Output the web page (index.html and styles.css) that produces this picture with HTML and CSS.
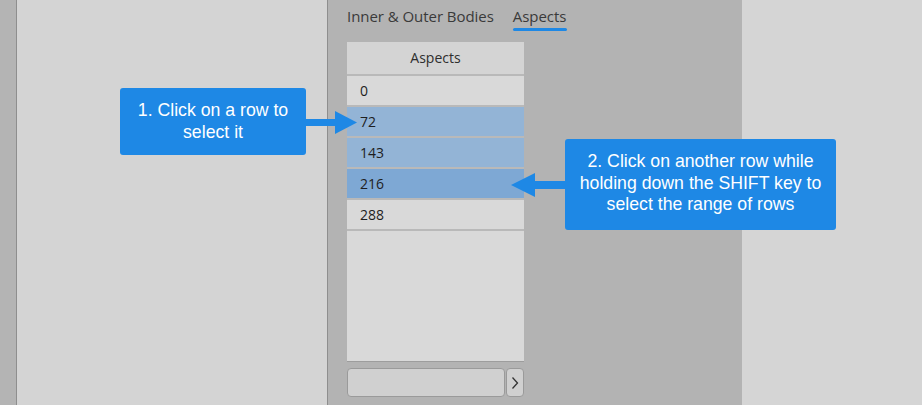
FILE: index.html
```html
<!DOCTYPE html>
<html>
<head>
<meta charset="utf-8">
<link rel="stylesheet" href="styles.css">
</head>
<body>
<div class="app">
  <div class="strip"></div>
  <div class="side"></div>
  <div class="panel">
    <div class="tabs">
      <div class="tab">Inner &amp; Outer Bodies</div>
      <div class="tab active">Aspects</div>
    </div>
    <div class="table">
      <div class="head">Aspects</div>
      <div class="row">0</div>
      <div class="row sel">72</div>
      <div class="row sel">143</div>
      <div class="row sel2">216</div>
      <div class="row">288</div>
      <div class="fill"></div>
    </div>
    <div class="controls">
      <div class="input"></div>
      <div class="btn">
        <svg width="10" height="14" viewBox="0 0 10 14"><path d="M2.5 1.5 L7.5 7 L2.5 12.5" fill="none" stroke="#333" stroke-width="1.3"/></svg>
      </div>
    </div>
  </div>
  <div class="rightside"></div>

  <div class="callout c1">1. Click on a row to<br>select it</div>
  <svg class="arrow a1" width="52" height="24" viewBox="0 0 52 24">
    <rect x="0" y="8" width="30" height="7" fill="#1e88e5"/>
    <polygon points="29,0 51,11.5 29,23" fill="#1e88e5"/>
  </svg>
  <div class="callout c2">2. Click on another row while<br>holding down the SHIFT key to<br>select the range of rows</div>
  <svg class="arrow a2" width="55" height="25" viewBox="0 0 55 25">
    <rect x="23" y="8" width="32" height="8" fill="#1e88e5"/>
    <polygon points="24,0 0,12 24,24" fill="#1e88e5"/>
  </svg>
</div>
</body>
</html>
```

FILE: styles.css
```css
html, body {
  margin: 0;
  padding: 0;
}
body {
  font-family: "Open Sans", "Liberation Sans", sans-serif;
}
.app {
  position: relative;
  display: flex;
  width: 922px;
  height: 405px;
  overflow: hidden;
  background: #d4d4d4;
}
.strip {
  width: 16px;
  background: #b4b4b4;
  border-right: 1px solid #8e8e8e;
}
.side {
  width: 310px;
  background: #d4d4d4;
  border-right: 1px solid #8e8e8e;
}
.panel {
  width: 376px;
  padding: 0 19px;
  background: #b3b3b3;
  display: flex;
  flex-direction: column;
}
.rightside {
  flex: 1;
  background: #d5d5d5;
}
.tabs {
  display: flex;
  gap: 19px;
  padding-top: 6px;
  height: 36px;
}
.tab {
  font-size: 15px;
  line-height: 20px;
  color: #3a3a3a;
  height: 25px;
  letter-spacing: -0.05px;
}
.tab.active {
  position: relative;
}
.tab.active::after {
  content: "";
  position: absolute;
  left: 0;
  right: -1px;
  top: 22px;
  height: 3px;
  border-radius: 2px;
  background: #1e88e5;
}
.table {
  width: 177px;
  height: 319px;
  display: flex;
  flex-direction: column;
  gap: 2px;
  background: #b9b9b9;
  border-bottom: 1px solid #9d9d9d;
}
.head {
  height: 32px;
  line-height: 32px;
  text-align: center;
  font-size: 14px;
  color: #2e2e2e;
  background: #d4d4d4;
}
.row {
  height: 29px;
  line-height: 29px;
  padding-left: 13px;
  font-size: 14px;
  color: #1e1e1e;
  background: #d9d9d9;
}
.row.sel {
  background: #93b4d6;
}
.row.sel2 {
  background: #7ea8d4;
}
.fill {
  flex: 1;
  background: #d9d9d9;
}
.controls {
  display: flex;
  gap: 1px;
  margin-top: 6px;
}
.input {
  width: 156px;
  height: 27px;
  background: #d0d0d0;
  border: 1px solid #9a9a9a;
  border-radius: 4px;
}
.btn {
  width: 16px;
  height: 27px;
  background: #d0d0d0;
  border: 1px solid #9a9a9a;
  border-radius: 4px;
  display: flex;
  align-items: center;
  justify-content: center;
}
.callout {
  position: absolute;
  background: #1e88e5;
  color: #ffffff;
  font-family: "Liberation Sans", Arial, sans-serif;
  font-size: 17.7px;
  line-height: 22px;
  text-align: center;
  border-radius: 3px;
  box-sizing: border-box;
}
.c1 {
  left: 120px;
  top: 88px;
  width: 186px;
  height: 67px;
  padding-top: 11px;
}
.c2 {
  left: 565px;
  top: 139px;
  width: 271px;
  height: 91px;
  padding-top: 12px;
  line-height: 21.7px;
}
.arrow {
  position: absolute;
}
.a1 {
  left: 306px;
  top: 111px;
}
.a2 {
  left: 511px;
  top: 173px;
}
```
